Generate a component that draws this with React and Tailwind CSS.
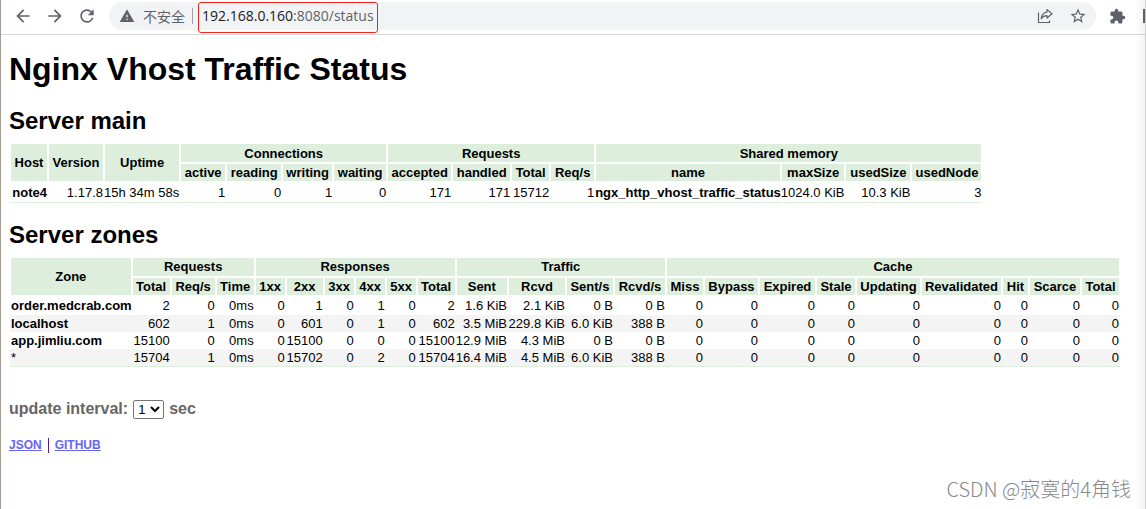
import { useState } from "react";
import {
  MdArrowBack,
  MdArrowForward,
  MdExtension,
  MdRefresh,
  MdStarBorder,
  MdWarning,
} from "react-icons/md";

const mainGroups = [
  { title: "Connections", columns: ["active", "reading", "writing", "waiting"] },
  { title: "Requests", columns: ["accepted", "handled", "Total", "Req/s"] },
  { title: "Shared memory", columns: ["name", "maxSize", "usedSize", "usedNode"] },
];

const mainWidths = [38, 56, 76, 46, 56, 51, 54, 65, 59, 39, 45, 185, 64, 66, 71];

const mainRow = [
  "1.17.8",
  "15h 34m 58s",
  "1",
  "0",
  "1",
  "0",
  "171",
  "171",
  "15712",
  "1",
  "ngx_http_vhost_traffic_status",
  "1024.0 KiB",
  "10.3 KiB",
  "3",
];

const zoneGroups = [
  { title: "Requests", columns: ["Total", "Req/s", "Time"] },
  { title: "Responses", columns: ["1xx", "2xx", "3xx", "4xx", "5xx", "Total"] },
  { title: "Traffic", columns: ["Sent", "Rcvd", "Sent/s", "Rcvd/s"] },
  {
    title: "Cache",
    columns: [
      "Miss",
      "Bypass",
      "Expired",
      "Stale",
      "Updating",
      "Revalidated",
      "Hit",
      "Scarce",
      "Total",
    ],
  },
];

const zoneWidths = [
  121, 39, 45, 39, 31, 38, 31, 31, 31, 39, 52, 58, 48, 52, 38, 55, 57, 40, 65, 81, 27, 52, 39,
];

const zones = [
  {
    name: "order.medcrab.com",
    requests: ["2", "0", "0ms"],
    responses: ["0", "1", "0", "1", "0", "2"],
    traffic: ["1.6 KiB", "2.1 KiB", "0 B", "0 B"],
    cache: [0, 0, 0, 0, 0, 0, 0, 0, 0],
  },
  {
    name: "localhost",
    requests: ["602", "1", "0ms"],
    responses: ["0", "601", "0", "1", "0", "602"],
    traffic: ["3.5 MiB", "229.8 KiB", "6.0 KiB", "388 B"],
    cache: [0, 0, 0, 0, 0, 0, 0, 0, 0],
  },
  {
    name: "app.jimliu.com",
    requests: ["15100", "0", "0ms"],
    responses: ["0", "15100", "0", "0", "0", "15100"],
    traffic: ["12.9 MiB", "4.3 MiB", "0 B", "0 B"],
    cache: [0, 0, 0, 0, 0, 0, 0, 0, 0],
  },
  {
    name: "*",
    requests: ["15704", "1", "0ms"],
    responses: ["0", "15702", "0", "2", "0", "15704"],
    traffic: ["16.4 MiB", "4.5 MiB", "6.0 KiB", "388 B"],
    cache: [0, 0, 0, 0, 0, 0, 0, 0, 0],
  },
];

const HeadCell = ({ children, ...props }) => (
  <th className="border-2 border-white bg-[#ddeedd] px-px text-center font-bold" {...props}>
    {children}
  </th>
);

const StatusTable = ({ widths, single, groups, children }) => (
  <table className="mt-[7px] border-collapse border-b border-[#ddeedd] text-[13px] leading-[15px] whitespace-nowrap">
    <colgroup>
      {widths.map((width, i) => (
        <col key={i} style={{ width }} />
      ))}
    </colgroup>
    <thead>
      <tr className="h-5">
        {single.map((title) => (
          <HeadCell key={title} rowSpan={2}>
            {title}
          </HeadCell>
        ))}
        {groups.map((group) => (
          <HeadCell key={group.title} colSpan={group.columns.length}>
            {group.title}
          </HeadCell>
        ))}
      </tr>
      <tr className="h-[19px]">
        {groups.map((group) =>
          group.columns.map((column) => <HeadCell key={group.title + column}>{column}</HeadCell>)
        )}
      </tr>
    </thead>
    <tbody>{children}</tbody>
  </table>
);

const ShareIcon = () => (
  <svg viewBox="0 0 16 16" className="h-4 w-4" fill="none" stroke="currentColor" strokeWidth="1.2">
    <path d="M1.5 4.5v10h11v-2" />
    <path
      d="M10 1.6l5 4.2-5 4.2V7.6C7.4 7.6 5.6 8.6 4.2 10.8 4.6 7 6.6 4.5 10 4.1z"
      strokeLinejoin="round"
    />
  </svg>
);

const Toolbar = () => (
  <header className="flex h-[35px] items-start border-b border-[#d5d7da] pl-3 text-[#5f6368]">
    <nav className="flex h-8 items-center gap-3">
      <button type="button" aria-label="Back">
        <MdArrowBack className="h-5 w-5" />
      </button>
      <button type="button" aria-label="Forward">
        <MdArrowForward className="h-5 w-5" />
      </button>
      <button type="button" aria-label="Reload">
        <MdRefresh className="h-5 w-5" />
      </button>
    </nav>
    <div className="mt-[2px] ml-3 flex h-7 flex-1 items-center rounded-full bg-[#f1f3f4] pr-[9px] pl-[10px]">
      <MdWarning className="h-4 w-4" />
      <span className="ml-2 font-['Noto_Sans_CJK_SC',sans-serif] text-sm">不安全</span>
      <span className="ml-[7px] h-4 w-px bg-[#9aa0a6]" />
      <div
        role="textbox"
        aria-label="Address"
        className="mt-[3px] ml-[5px] flex h-[31px] shrink-0 items-center rounded-[3px] border border-[#f5221b] px-[3px] pb-[3px] font-['Open_Sans',sans-serif] text-sm whitespace-nowrap"
      >
        <span className="text-[#202124]">192.168.0.160</span>:8080/status
      </div>
      <div className="ml-auto flex items-center gap-4">
        <button type="button" aria-label="Share">
          <ShareIcon />
        </button>
        <button type="button" aria-label="Bookmark">
          <MdStarBorder className="h-[18px] w-[18px]" />
        </button>
      </div>
    </div>
    <div className="ml-[13px] flex h-8 w-[37px] items-center justify-between overflow-hidden">
      <button type="button" aria-label="Extensions">
        <MdExtension className="h-[17px] w-[17px]" />
      </button>
      <span className="h-[14px] w-[3px] border-2 border-r-0 border-[#5f6368]" />
    </div>
  </header>
);

const App = () => {
  const [interval, setInterval] = useState("1");

  return (
    <div className="relative min-h-screen overflow-hidden border-l border-[#a89c90] bg-white font-['Liberation_Sans',sans-serif] text-black">
      <Toolbar />

      <main className="px-2 pt-4">
        <h1 className="text-[32px] leading-9 font-bold">Nginx Vhost Traffic Status</h1>

        <h2 className="mt-5 text-2xl leading-7 font-bold">Server main</h2>
        <StatusTable
          widths={mainWidths}
          single={["Host", "Version", "Uptime"]}
          groups={mainGroups}
        >
          <tr className="h-5 text-right">
            <th scope="row" className="pr-px text-right font-bold">
              note4
            </th>
            {mainRow.map((value, i) => (
              <td key={i} className={i === 10 ? "font-bold" : "pr-px"}>
                {value}
              </td>
            ))}
          </tr>
        </StatusTable>

        <h2 className="mt-[18px] text-2xl leading-7 font-bold">Server zones</h2>
        <StatusTable widths={zoneWidths} single={["Zone"]} groups={zoneGroups}>
          {zones.map((zone) => (
            <tr
              key={zone.name}
              className="h-[17px] text-right first:h-[19px] last:h-[18px] even:bg-[#f4f4f4]"
            >
              <th
                scope="row"
                className={
                  zone.name === "*" ? "pl-px text-left font-normal" : "pl-px text-left font-bold"
                }
              >
                {zone.name}
              </th>
              {[...zone.requests, ...zone.responses, ...zone.traffic, ...zone.cache].map(
                (value, i) => (
                  <td key={i} className="pr-px">
                    {value}
                  </td>
                )
              )}
            </tr>
          ))}
        </StatusTable>

        <div className="mt-[30px] flex items-center gap-[5px] font-bold text-[#666]">
          <label htmlFor="refresh">update interval:</label>
          <select
            id="refresh"
            value={interval}
            onChange={(e) => setInterval(e.target.value)}
            className="h-[19px] w-[31px] rounded-[2px] border border-[#767676] bg-white text-[13px] font-normal text-black"
          >
            <option value="1">1</option>
            <option value="2">2</option>
            <option value="3">3</option>
            <option value="5">5</option>
            <option value="10">10</option>
          </select>
          <span>sec</span>
        </div>

        <div className="mt-4 flex items-center text-xs font-bold text-[#6666f5]">
          <a href="#json" className="underline">
            JSON
          </a>
          <span className="mx-[6px] h-[15px] w-px bg-[#551a8b]" />
          <a href="#github" className="underline">
            GITHUB
          </a>
        </div>
      </main>

      <p className="absolute right-[15px] bottom-[6px] font-['Noto_Sans_CJK_SC',sans-serif] text-[20px] leading-7 font-light text-[#888]">
        CSDN @寂寞的4角钱
      </p>
      <div className="pointer-events-none absolute inset-y-0 right-0 w-[10px] border-r border-[#d0d0d0] bg-linear-to-r from-transparent to-black/5" />
    </div>
  );
};

export default App;
